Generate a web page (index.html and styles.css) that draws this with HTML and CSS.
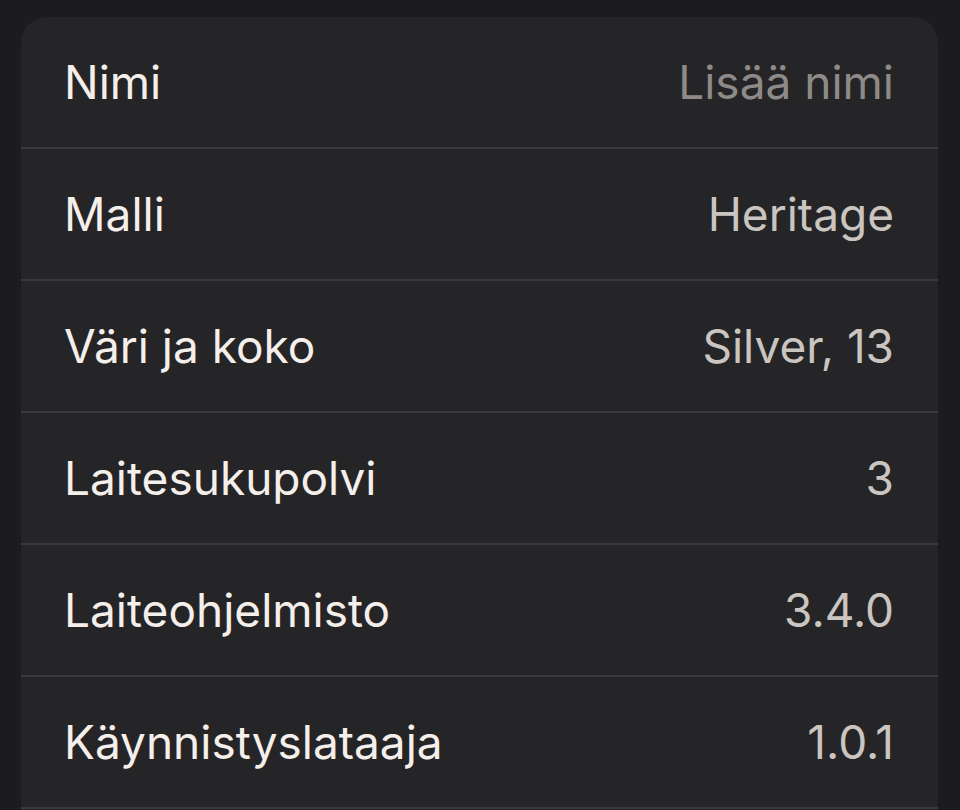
FILE: index.html
```html
<!DOCTYPE html>
<html lang="fi">
<head>
    <meta charset="UTF-8">
    <meta name="viewport" content="width=device-width, initial-scale=1.0">
    <title>Laitteen tiedot</title>
    <link rel="stylesheet" href="styles.css">
</head>
<body>
    <div class="info-card">
        <div class="info-row">
            <span class="label">Nimi</span>
            <span class="value placeholder">Lisää nimi</span>
        </div>
        <div class="info-row">
            <span class="label">Malli</span>
            <span class="value">Heritage</span>
        </div>
        <div class="info-row">
            <span class="label">Väri ja koko</span>
            <span class="value">Silver, 13</span>
        </div>
        <div class="info-row">
            <span class="label">Laitesukupolvi</span>
            <span class="value">3</span>
        </div>
        <div class="info-row">
            <span class="label">Laiteohjelmisto</span>
            <span class="value">3.4.0</span>
        </div>
        <div class="info-row">
            <span class="label">Käynnistyslataaja</span>
            <span class="value">1.0.1</span>
        </div>
    </div>
</body>
</html>
```

FILE: styles.css
```css
body {
    font-family: 'Inter', 'Noto Sans', sans-serif;
    background-color: #1c1c1e;
    margin: 0;
    padding: 17px 22px 0 21px;
    height: 810px;
    overflow: hidden;
    box-sizing: border-box;
}

.info-card {
    background: #252527;
    border-radius: 26px 26px 0 0;
    padding-bottom: 40px;
}

.info-row {
    display: flex;
    justify-content: space-between;
    align-items: center;
    height: 130px;
    padding: 0 44px 0 43px;
    border-bottom: 2px solid #3a3a3c;
}

.label {
    font-size: 46px;
    color: #f5efeb;
}

.value {
    font-size: 46px;
    color: #cbc5c1;
}

.value.placeholder {
    color: #8e8a88;
}
```
